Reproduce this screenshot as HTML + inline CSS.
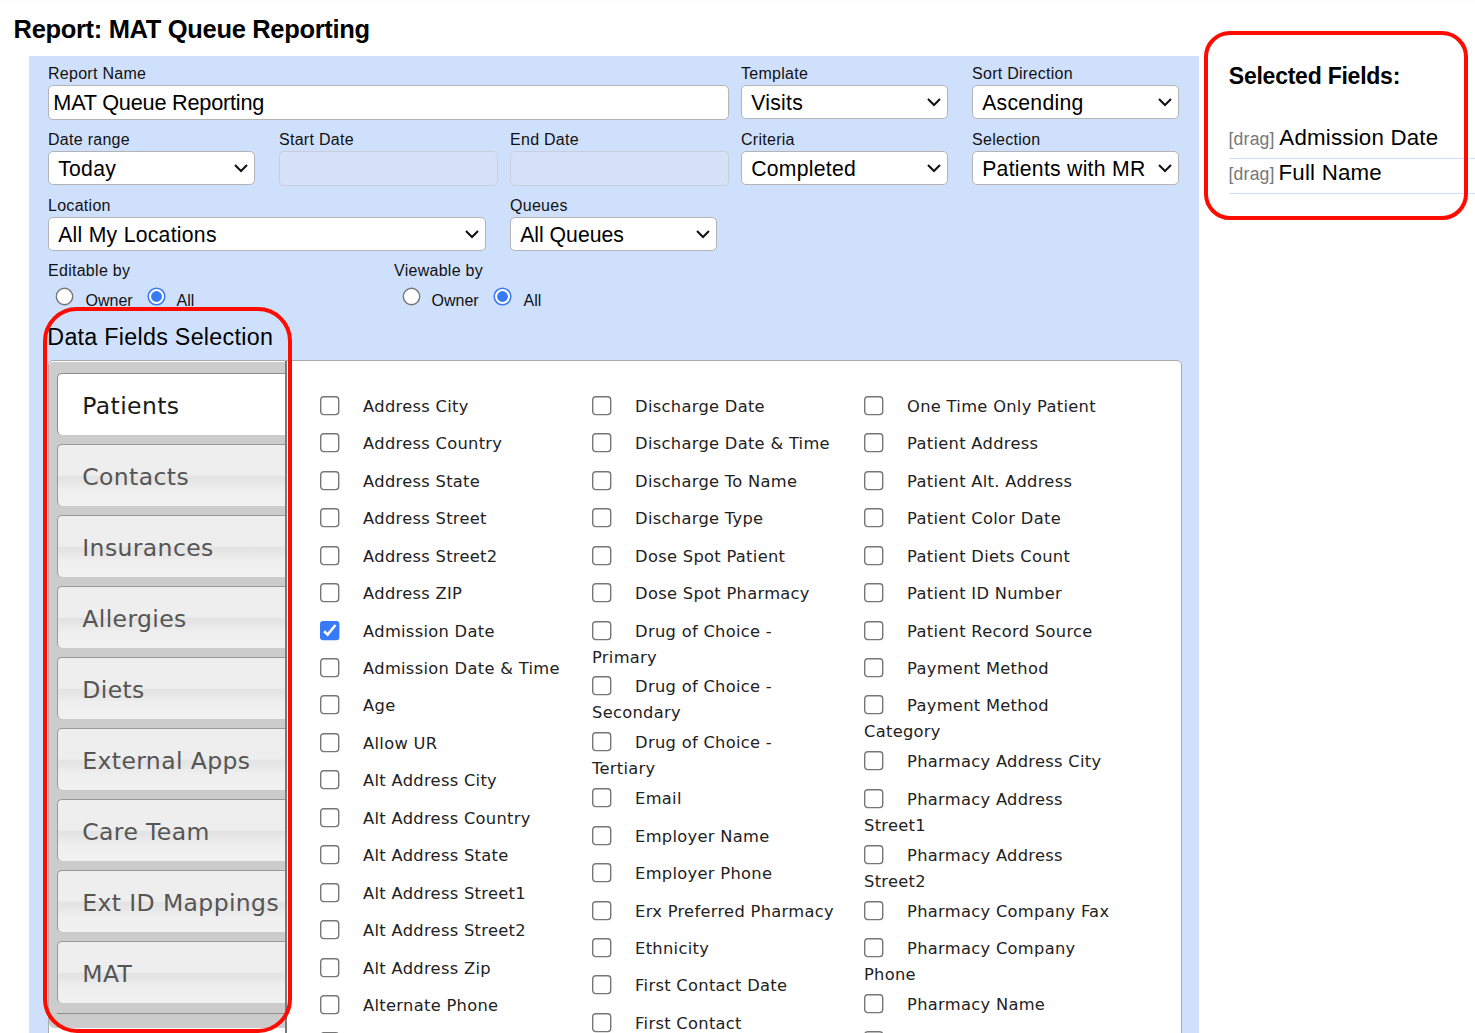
<!DOCTYPE html>
<html lang="en">
<head>
<meta charset="utf-8">
<title>Report: MAT Queue Reporting</title>
<style>
html,body{margin:0;padding:0;background:#fff;}
body{width:1475px;height:1033px;overflow:hidden;position:relative;font-family:"Liberation Sans",Arial,sans-serif;color:#000;}
.abs,.lb,.sel,.inp,.fl,.cb,.tab,.rt{position:absolute;box-sizing:border-box;white-space:nowrap;}
h1{position:absolute;left:13.6px;top:13.8px;margin:0;font-size:25.5px;line-height:30px;font-weight:bold;white-space:nowrap;letter-spacing:-0.33px;}
#panel{position:absolute;left:29px;top:56px;width:1170px;height:980px;background:#cfe0fc;}
.lb{font-size:16px;line-height:18px;color:#111;letter-spacing:0.28px;margin-top:1px;}
.sel,.inp{background:#fff;border:1px solid #b4b4b4;border-radius:5px;height:34px;font-size:21.2px;line-height:34.4px;padding-left:9.2px;color:#000;letter-spacing:0.27px;}
.inp{height:35px;padding-left:4.3px;font-size:21.7px;line-height:34px;letter-spacing:-0.22px;}
.inp.dis{background:#d5e2f8;border-color:#c9cfda;}
.sel svg{position:absolute;right:6px;top:12px;}
.rad{position:absolute;width:19px;height:19px;}
.rt{font-size:16px;line-height:18px;color:#111;margin-top:1px;margin-left:-0.5px;}
h2{position:absolute;left:47.3px;top:322.5px;margin:0;font-size:23.3px;line-height:28px;letter-spacing:0.27px;font-weight:normal;white-space:nowrap;}
#tabs{position:absolute;left:48px;top:360px;width:1134px;height:700px;background:#fff;border:1px solid #aaa;border-radius:5px;box-sizing:border-box;}
#nav{position:absolute;left:49px;top:361.7px;width:236px;height:666.3px;background:#ccc;border-radius:4px 0 0 5px;box-sizing:border-box;}
#vl{position:absolute;left:285px;top:361px;width:2px;height:700px;background:#7a7a7a;}
#hl{position:absolute;left:57px;top:1013px;width:228px;height:1px;background:#8f8f8f;}
.tab{left:57px;width:228px;height:61.7px;border:1px solid #999;border-right:none;border-bottom:none;border-radius:5px 0 0 5px;font-family:"DejaVu Sans",Verdana,sans-serif;font-size:23.5px;color:#555;
 background:linear-gradient(to bottom,#eee 0%,#eee 49%,#e3e3e3 52%,#e4e4e4 56%,#efefef 74%,#f1f1f1 100%);}
.tab span{position:absolute;left:24.3px;top:16.5px;line-height:30px;letter-spacing:0.38px}
.tab.act{background:#fff;color:#1a1a1a;border-color:#8c8c8c;}
.cb{position:absolute;width:20px;height:20px;}
.fl{font-family:"DejaVu Sans",Verdana,sans-serif;font-size:16.3px;line-height:20px;color:#222;letter-spacing:0.3px;}
#red1{position:absolute;left:43px;top:307px;width:249px;height:726px;border:4px solid #ff0b00;border-radius:34px;box-sizing:border-box;}
#red2{position:absolute;left:1204px;top:31px;width:264px;height:189px;border:4px solid #ff0b00;border-radius:26px;box-sizing:border-box;}
#sf{position:absolute;left:1228.8px;top:61.6px;font-size:23px;line-height:28px;font-weight:bold;white-space:nowrap;letter-spacing:-0.24px;}
.dr{position:absolute;left:1229px;width:260px;height:35px;border-bottom:1px solid #cfe0fc;box-sizing:border-box;white-space:nowrap;font-size:22.3px;line-height:28px;letter-spacing:0.2px;}
.dr small{font-size:17.6px;color:#777;letter-spacing:0.2px;margin-left:-0.5px;margin-right:-0.5px;}
</style>
</head>
<body>
<div style="position:absolute;left:0;top:0;width:1475px;height:1px;background:#fbfbfb"></div>
<h1>Report: MAT Queue Reporting</h1>
<div id="panel"></div>

<span class="lb" style="left:48px;top:64px">Report Name</span>
<div class="inp" style="left:48px;top:85px;width:681px">MAT Queue Reporting</div>
<span class="lb" style="left:741px;top:64px">Template</span>
<div class="sel" style="left:741px;top:85px;width:207px">Visits<svg width="14" height="9" viewBox="0 0 14 9"><path d="M1 1 L7 7 L13 1" fill="none" stroke="#111" stroke-width="2"/></svg></div>
<span class="lb" style="left:972px;top:64px">Sort Direction</span>
<div class="sel" style="left:972px;top:85px;width:207px">Ascending<svg width="14" height="9" viewBox="0 0 14 9"><path d="M1 1 L7 7 L13 1" fill="none" stroke="#111" stroke-width="2"/></svg></div>

<span class="lb" style="left:48px;top:130px">Date range</span>
<div class="sel" style="left:48px;top:151px;width:207px">Today<svg width="14" height="9" viewBox="0 0 14 9"><path d="M1 1 L7 7 L13 1" fill="none" stroke="#111" stroke-width="2"/></svg></div>
<span class="lb" style="left:279px;top:130px">Start Date</span>
<div class="inp dis" style="left:279px;top:151px;width:219px"></div>
<span class="lb" style="left:510px;top:130px">End Date</span>
<div class="inp dis" style="left:510px;top:151px;width:219px"></div>
<span class="lb" style="left:741px;top:130px">Criteria</span>
<div class="sel" style="left:741px;top:151px;width:207px">Completed<svg width="14" height="9" viewBox="0 0 14 9"><path d="M1 1 L7 7 L13 1" fill="none" stroke="#111" stroke-width="2"/></svg></div>
<span class="lb" style="left:972px;top:130px">Selection</span>
<div class="sel" style="left:972px;top:151px;width:207px">Patients with MR<svg width="14" height="9" viewBox="0 0 14 9"><path d="M1 1 L7 7 L13 1" fill="none" stroke="#111" stroke-width="2"/></svg></div>

<span class="lb" style="left:48px;top:196px">Location</span>
<div class="sel" style="left:48px;top:217px;width:438px">All My Locations<svg width="14" height="9" viewBox="0 0 14 9"><path d="M1 1 L7 7 L13 1" fill="none" stroke="#111" stroke-width="2"/></svg></div>
<span class="lb" style="left:510px;top:196px">Queues</span>
<div class="sel" style="left:510px;top:217px;width:207px;letter-spacing:0px">All Queues<svg width="14" height="9" viewBox="0 0 14 9"><path d="M1 1 L7 7 L13 1" fill="none" stroke="#111" stroke-width="2"/></svg></div>

<span class="lb" style="left:48px;top:261px">Editable by</span>
<svg class="rad" style="left:55.0px;top:286.5px" width="19" height="19"><circle cx="9.5" cy="9.5" r="8.2" fill="#fff" stroke="#767676" stroke-width="1.4"/></svg><span class="rt" style="left:86px;top:291px">Owner</span>
<svg class="rad" style="left:146.5px;top:286.5px" width="19" height="19"><circle cx="9.5" cy="9.5" r="8.3" fill="#fff" stroke="#3779f7" stroke-width="1.5"/><circle cx="9.5" cy="9.5" r="5.4" fill="#3779f7"/></svg><span class="rt" style="left:177px;top:291px">All</span>
<span class="lb" style="left:394px;top:261px">Viewable by</span>
<svg class="rad" style="left:401.5px;top:286.5px" width="19" height="19"><circle cx="9.5" cy="9.5" r="8.2" fill="#fff" stroke="#767676" stroke-width="1.4"/></svg><span class="rt" style="left:432px;top:291px">Owner</span>
<svg class="rad" style="left:492.5px;top:286.5px" width="19" height="19"><circle cx="9.5" cy="9.5" r="8.3" fill="#fff" stroke="#3779f7" stroke-width="1.5"/><circle cx="9.5" cy="9.5" r="5.4" fill="#3779f7"/></svg><span class="rt" style="left:524px;top:291px">All</span>

<h2>Data Fields Selection</h2>
<div id="tabs"></div>
<div id="nav"></div>
<div id="vl"></div>
<div id="hl"></div>
<div class="tab act" style="top:373px"><span>Patients</span></div>
<div class="tab" style="top:444px"><span>Contacts</span></div>
<div class="tab" style="top:515px"><span>Insurances</span></div>
<div class="tab" style="top:586px"><span>Allergies</span></div>
<div class="tab" style="top:657px"><span>Diets</span></div>
<div class="tab" style="top:728px"><span>External Apps</span></div>
<div class="tab" style="top:799px"><span>Care Team</span></div>
<div class="tab" style="top:870px"><span>Ext ID Mappings</span></div>
<div class="tab" style="top:941px"><span>MAT</span></div>
<svg class="cb" style="left:320px;top:396px" width="20" height="20"><rect x=".7" y=".7" width="18" height="17.9" rx="3" fill="#fff" stroke="#767676" stroke-width="1.4"/></svg>
<span class="fl" style="left:363.1px;top:396.8px">Address City</span>
<svg class="cb" style="left:320px;top:433px" width="20" height="20"><rect x=".7" y=".7" width="18" height="17.9" rx="3" fill="#fff" stroke="#767676" stroke-width="1.4"/></svg>
<span class="fl" style="left:363.1px;top:433.8px">Address Country</span>
<svg class="cb" style="left:320px;top:471px" width="20" height="20"><rect x=".7" y=".7" width="18" height="17.9" rx="3" fill="#fff" stroke="#767676" stroke-width="1.4"/></svg>
<span class="fl" style="left:363.1px;top:471.8px">Address State</span>
<svg class="cb" style="left:320px;top:508px" width="20" height="20"><rect x=".7" y=".7" width="18" height="17.9" rx="3" fill="#fff" stroke="#767676" stroke-width="1.4"/></svg>
<span class="fl" style="left:363.1px;top:508.8px">Address Street</span>
<svg class="cb" style="left:320px;top:546px" width="20" height="20"><rect x=".7" y=".7" width="18" height="17.9" rx="3" fill="#fff" stroke="#767676" stroke-width="1.4"/></svg>
<span class="fl" style="left:363.1px;top:546.8px">Address Street2</span>
<svg class="cb" style="left:320px;top:583px" width="20" height="20"><rect x=".7" y=".7" width="18" height="17.9" rx="3" fill="#fff" stroke="#767676" stroke-width="1.4"/></svg>
<span class="fl" style="left:363.1px;top:583.8px">Address ZIP</span>
<svg class="cb" style="left:320px;top:621px" width="20" height="20"><rect x="0" y="0" width="19.4" height="19.3" rx="3.2" fill="#3779f7"/><path d="M4.1 10.2 L7.6 13.6 L15.5 4.0" fill="none" stroke="#fff" stroke-width="2.6"/></svg>
<span class="fl" style="left:363.1px;top:621.8px">Admission Date</span>
<svg class="cb" style="left:320px;top:658px" width="20" height="20"><rect x=".7" y=".7" width="18" height="17.9" rx="3" fill="#fff" stroke="#767676" stroke-width="1.4"/></svg>
<span class="fl" style="left:363.1px;top:658.8px">Admission Date &amp; Time</span>
<svg class="cb" style="left:320px;top:695px" width="20" height="20"><rect x=".7" y=".7" width="18" height="17.9" rx="3" fill="#fff" stroke="#767676" stroke-width="1.4"/></svg>
<span class="fl" style="left:363.1px;top:695.8px">Age</span>
<svg class="cb" style="left:320px;top:733px" width="20" height="20"><rect x=".7" y=".7" width="18" height="17.9" rx="3" fill="#fff" stroke="#767676" stroke-width="1.4"/></svg>
<span class="fl" style="left:363.1px;top:733.8px">Allow UR</span>
<svg class="cb" style="left:320px;top:770px" width="20" height="20"><rect x=".7" y=".7" width="18" height="17.9" rx="3" fill="#fff" stroke="#767676" stroke-width="1.4"/></svg>
<span class="fl" style="left:363.1px;top:770.8px">Alt Address City</span>
<svg class="cb" style="left:320px;top:808px" width="20" height="20"><rect x=".7" y=".7" width="18" height="17.9" rx="3" fill="#fff" stroke="#767676" stroke-width="1.4"/></svg>
<span class="fl" style="left:363.1px;top:808.8px">Alt Address Country</span>
<svg class="cb" style="left:320px;top:845px" width="20" height="20"><rect x=".7" y=".7" width="18" height="17.9" rx="3" fill="#fff" stroke="#767676" stroke-width="1.4"/></svg>
<span class="fl" style="left:363.1px;top:845.8px">Alt Address State</span>
<svg class="cb" style="left:320px;top:883px" width="20" height="20"><rect x=".7" y=".7" width="18" height="17.9" rx="3" fill="#fff" stroke="#767676" stroke-width="1.4"/></svg>
<span class="fl" style="left:363.1px;top:883.8px">Alt Address Street1</span>
<svg class="cb" style="left:320px;top:920px" width="20" height="20"><rect x=".7" y=".7" width="18" height="17.9" rx="3" fill="#fff" stroke="#767676" stroke-width="1.4"/></svg>
<span class="fl" style="left:363.1px;top:920.8px">Alt Address Street2</span>
<svg class="cb" style="left:320px;top:958px" width="20" height="20"><rect x=".7" y=".7" width="18" height="17.9" rx="3" fill="#fff" stroke="#767676" stroke-width="1.4"/></svg>
<span class="fl" style="left:363.1px;top:958.8px">Alt Address Zip</span>
<svg class="cb" style="left:320px;top:995px" width="20" height="20"><rect x=".7" y=".7" width="18" height="17.9" rx="3" fill="#fff" stroke="#767676" stroke-width="1.4"/></svg>
<span class="fl" style="left:363.1px;top:995.8px">Alternate Phone</span>
<svg class="cb" style="left:320px;top:1032px" width="20" height="20"><rect x=".7" y=".7" width="18" height="17.9" rx="3" fill="#fff" stroke="#767676" stroke-width="1.4"/></svg>
<svg class="cb" style="left:592px;top:396px" width="20" height="20"><rect x=".7" y=".7" width="18" height="17.9" rx="3" fill="#fff" stroke="#767676" stroke-width="1.4"/></svg>
<span class="fl" style="left:635.1px;top:396.8px">Discharge Date</span>
<svg class="cb" style="left:592px;top:433px" width="20" height="20"><rect x=".7" y=".7" width="18" height="17.9" rx="3" fill="#fff" stroke="#767676" stroke-width="1.4"/></svg>
<span class="fl" style="left:635.1px;top:433.8px">Discharge Date &amp; Time</span>
<svg class="cb" style="left:592px;top:471px" width="20" height="20"><rect x=".7" y=".7" width="18" height="17.9" rx="3" fill="#fff" stroke="#767676" stroke-width="1.4"/></svg>
<span class="fl" style="left:635.1px;top:471.8px">Discharge To Name</span>
<svg class="cb" style="left:592px;top:508px" width="20" height="20"><rect x=".7" y=".7" width="18" height="17.9" rx="3" fill="#fff" stroke="#767676" stroke-width="1.4"/></svg>
<span class="fl" style="left:635.1px;top:508.8px">Discharge Type</span>
<svg class="cb" style="left:592px;top:546px" width="20" height="20"><rect x=".7" y=".7" width="18" height="17.9" rx="3" fill="#fff" stroke="#767676" stroke-width="1.4"/></svg>
<span class="fl" style="left:635.1px;top:546.8px">Dose Spot Patient</span>
<svg class="cb" style="left:592px;top:583px" width="20" height="20"><rect x=".7" y=".7" width="18" height="17.9" rx="3" fill="#fff" stroke="#767676" stroke-width="1.4"/></svg>
<span class="fl" style="left:635.1px;top:583.8px">Dose Spot Pharmacy</span>
<svg class="cb" style="left:592px;top:621px" width="20" height="20"><rect x=".7" y=".7" width="18" height="17.9" rx="3" fill="#fff" stroke="#767676" stroke-width="1.4"/></svg>
<span class="fl" style="left:635.1px;top:621.8px">Drug of Choice -</span>
<span class="fl" style="left:592px;top:647.8px">Primary</span>
<svg class="cb" style="left:592px;top:676px" width="20" height="20"><rect x=".7" y=".7" width="18" height="17.9" rx="3" fill="#fff" stroke="#767676" stroke-width="1.4"/></svg>
<span class="fl" style="left:635.1px;top:676.8px">Drug of Choice -</span>
<span class="fl" style="left:592px;top:702.8px">Secondary</span>
<svg class="cb" style="left:592px;top:732px" width="20" height="20"><rect x=".7" y=".7" width="18" height="17.9" rx="3" fill="#fff" stroke="#767676" stroke-width="1.4"/></svg>
<span class="fl" style="left:635.1px;top:732.8px">Drug of Choice -</span>
<span class="fl" style="left:592px;top:758.8px">Tertiary</span>
<svg class="cb" style="left:592px;top:788px" width="20" height="20"><rect x=".7" y=".7" width="18" height="17.9" rx="3" fill="#fff" stroke="#767676" stroke-width="1.4"/></svg>
<span class="fl" style="left:635.1px;top:788.8px">Email</span>
<svg class="cb" style="left:592px;top:826px" width="20" height="20"><rect x=".7" y=".7" width="18" height="17.9" rx="3" fill="#fff" stroke="#767676" stroke-width="1.4"/></svg>
<span class="fl" style="left:635.1px;top:826.8px">Employer Name</span>
<svg class="cb" style="left:592px;top:863px" width="20" height="20"><rect x=".7" y=".7" width="18" height="17.9" rx="3" fill="#fff" stroke="#767676" stroke-width="1.4"/></svg>
<span class="fl" style="left:635.1px;top:863.8px">Employer Phone</span>
<svg class="cb" style="left:592px;top:901px" width="20" height="20"><rect x=".7" y=".7" width="18" height="17.9" rx="3" fill="#fff" stroke="#767676" stroke-width="1.4"/></svg>
<span class="fl" style="left:635.1px;top:901.8px">Erx Preferred Pharmacy</span>
<svg class="cb" style="left:592px;top:938px" width="20" height="20"><rect x=".7" y=".7" width="18" height="17.9" rx="3" fill="#fff" stroke="#767676" stroke-width="1.4"/></svg>
<span class="fl" style="left:635.1px;top:938.8px">Ethnicity</span>
<svg class="cb" style="left:592px;top:975px" width="20" height="20"><rect x=".7" y=".7" width="18" height="17.9" rx="3" fill="#fff" stroke="#767676" stroke-width="1.4"/></svg>
<span class="fl" style="left:635.1px;top:975.8px">First Contact Date</span>
<svg class="cb" style="left:592px;top:1013px" width="20" height="20"><rect x=".7" y=".7" width="18" height="17.9" rx="3" fill="#fff" stroke="#767676" stroke-width="1.4"/></svg>
<span class="fl" style="left:635.1px;top:1013.8px">First Contact</span>
<svg class="cb" style="left:864px;top:396px" width="20" height="20"><rect x=".7" y=".7" width="18" height="17.9" rx="3" fill="#fff" stroke="#767676" stroke-width="1.4"/></svg>
<span class="fl" style="left:907.1px;top:396.8px">One Time Only Patient</span>
<svg class="cb" style="left:864px;top:433px" width="20" height="20"><rect x=".7" y=".7" width="18" height="17.9" rx="3" fill="#fff" stroke="#767676" stroke-width="1.4"/></svg>
<span class="fl" style="left:907.1px;top:433.8px">Patient Address</span>
<svg class="cb" style="left:864px;top:471px" width="20" height="20"><rect x=".7" y=".7" width="18" height="17.9" rx="3" fill="#fff" stroke="#767676" stroke-width="1.4"/></svg>
<span class="fl" style="left:907.1px;top:471.8px">Patient Alt. Address</span>
<svg class="cb" style="left:864px;top:508px" width="20" height="20"><rect x=".7" y=".7" width="18" height="17.9" rx="3" fill="#fff" stroke="#767676" stroke-width="1.4"/></svg>
<span class="fl" style="left:907.1px;top:508.8px">Patient Color Date</span>
<svg class="cb" style="left:864px;top:546px" width="20" height="20"><rect x=".7" y=".7" width="18" height="17.9" rx="3" fill="#fff" stroke="#767676" stroke-width="1.4"/></svg>
<span class="fl" style="left:907.1px;top:546.8px">Patient Diets Count</span>
<svg class="cb" style="left:864px;top:583px" width="20" height="20"><rect x=".7" y=".7" width="18" height="17.9" rx="3" fill="#fff" stroke="#767676" stroke-width="1.4"/></svg>
<span class="fl" style="left:907.1px;top:583.8px">Patient ID Number</span>
<svg class="cb" style="left:864px;top:621px" width="20" height="20"><rect x=".7" y=".7" width="18" height="17.9" rx="3" fill="#fff" stroke="#767676" stroke-width="1.4"/></svg>
<span class="fl" style="left:907.1px;top:621.8px">Patient Record Source</span>
<svg class="cb" style="left:864px;top:658px" width="20" height="20"><rect x=".7" y=".7" width="18" height="17.9" rx="3" fill="#fff" stroke="#767676" stroke-width="1.4"/></svg>
<span class="fl" style="left:907.1px;top:658.8px">Payment Method</span>
<svg class="cb" style="left:864px;top:695px" width="20" height="20"><rect x=".7" y=".7" width="18" height="17.9" rx="3" fill="#fff" stroke="#767676" stroke-width="1.4"/></svg>
<span class="fl" style="left:907.1px;top:695.8px">Payment Method</span>
<span class="fl" style="left:864px;top:721.8px">Category</span>
<svg class="cb" style="left:864px;top:751px" width="20" height="20"><rect x=".7" y=".7" width="18" height="17.9" rx="3" fill="#fff" stroke="#767676" stroke-width="1.4"/></svg>
<span class="fl" style="left:907.1px;top:751.8px">Pharmacy Address City</span>
<svg class="cb" style="left:864px;top:789px" width="20" height="20"><rect x=".7" y=".7" width="18" height="17.9" rx="3" fill="#fff" stroke="#767676" stroke-width="1.4"/></svg>
<span class="fl" style="left:907.1px;top:789.8px">Pharmacy Address</span>
<span class="fl" style="left:864px;top:815.8px">Street1</span>
<svg class="cb" style="left:864px;top:845px" width="20" height="20"><rect x=".7" y=".7" width="18" height="17.9" rx="3" fill="#fff" stroke="#767676" stroke-width="1.4"/></svg>
<span class="fl" style="left:907.1px;top:845.8px">Pharmacy Address</span>
<span class="fl" style="left:864px;top:871.8px">Street2</span>
<svg class="cb" style="left:864px;top:901px" width="20" height="20"><rect x=".7" y=".7" width="18" height="17.9" rx="3" fill="#fff" stroke="#767676" stroke-width="1.4"/></svg>
<span class="fl" style="left:907.1px;top:901.8px">Pharmacy Company Fax</span>
<svg class="cb" style="left:864px;top:938px" width="20" height="20"><rect x=".7" y=".7" width="18" height="17.9" rx="3" fill="#fff" stroke="#767676" stroke-width="1.4"/></svg>
<span class="fl" style="left:907.1px;top:938.8px">Pharmacy Company</span>
<span class="fl" style="left:864px;top:964.8px">Phone</span>
<svg class="cb" style="left:864px;top:994px" width="20" height="20"><rect x=".7" y=".7" width="18" height="17.9" rx="3" fill="#fff" stroke="#767676" stroke-width="1.4"/></svg>
<span class="fl" style="left:907.1px;top:994.8px">Pharmacy Name</span>
<svg class="cb" style="left:864px;top:1031px" width="20" height="20"><rect x=".7" y=".7" width="18" height="17.9" rx="3" fill="#fff" stroke="#767676" stroke-width="1.4"/></svg>

<div id="sf">Selected Fields:</div>
<div class="dr" style="top:124px"><small>[drag]</small> Admission Date</div>
<div class="dr" style="top:159px"><small style="margin-right:-2.6px">[drag]</small> Full Name</div>

<div id="red1"></div>
<div id="red2"></div>
</body>
</html>
